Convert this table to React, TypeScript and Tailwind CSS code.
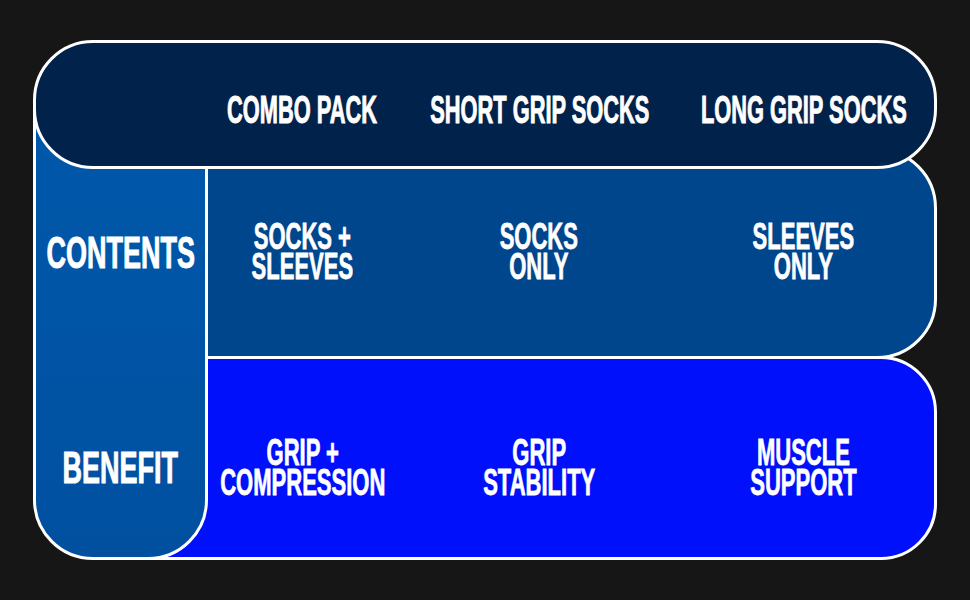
import React from "react";

const FONT = "font-['Liberation_Sans',Arial,sans-serif] font-bold text-white uppercase";

function HeadText({ children }: { children: React.ReactNode }) {
  return (
    <div className="flex justify-center">
      <span
        className={`${FONT} inline-block whitespace-nowrap text-[39px] leading-[39px] scale-x-[0.56] [-webkit-text-stroke:1px_white]`}
      >
        {children}
      </span>
    </div>
  );
}

function CellText({ a, b }: { a: string; b: string }) {
  return (
    <div className="flex justify-center">
      <div
        className={`${FONT} flex flex-col items-center whitespace-nowrap text-center text-[37px] leading-[30px] scale-x-[0.595] [-webkit-text-stroke:0.8px_white]`}
      >
        <span className="block h-[30px]">{a}</span>
        <span className="block h-[30px]">{b}</span>
      </div>
    </div>
  );
}

function RowLabel({ children }: { children: React.ReactNode }) {
  return (
    <span
      className={`${FONT} inline-block whitespace-nowrap text-[45px] leading-[45px] scale-x-[0.6] [-webkit-text-stroke:1px_white]`}
    >
      {children}
    </span>
  );
}

export default function App() {
  return (
    <div className="w-[970px] h-[600px] bg-[#161616] pt-[40px] pl-[33px]">
      <div className="flex flex-col w-[904px]">
        {/* Header row */}
        <div className="relative z-30 h-[129px] rounded-[60px] border-[3px] border-white bg-[#01224a] pt-[9px] grid grid-cols-[170px_192px_284px_244px] items-center">
          <div />
          <HeadText>Combo Pack</HeadText>
          <HeadText>Short Grip Socks</HeadText>
          <HeadText>Long Grip Socks</HeadText>
        </div>

        {/* Body */}
        <div className="flex -mt-[68px]">
          {/* Left label column */}
          <div className="relative z-20 w-[175px] h-[459px] shrink-0 rounded-b-[60px] border-[3px] border-white bg-gradient-to-b from-[#0058aa] to-[#0050a0] flex flex-col">
            <div className="h-[44px]" />
            <div className="h-[209px] flex items-center justify-center">
              <RowLabel>Contents</RowLabel>
            </div>
            <div className="flex-1 pt-[21px] flex items-center justify-center">
              <RowLabel>Benefit</RowLabel>
            </div>
          </div>

          {/* Right rows */}
          <div className="flex flex-col w-[732px] -ml-[3px] pt-[47px]">
            <div className="relative z-10 h-[211px] rounded-r-[60px] border-[3px] border-white bg-[#00468c] pb-[4px] grid grid-cols-[189px_284px_244px] items-center">
              <CellText a="Socks +" b="Sleeves" />
              <CellText a="Socks" b="Only" />
              <CellText a="Sleeves" b="Only" />
            </div>
            <div className="relative z-[15] w-[817px] h-[204px] -mt-[3px] -ml-[85px] rounded-r-[56px] border-[3px] border-white bg-[#0010fb] pl-[85px] pt-[20px] grid grid-cols-[189px_284px_244px] items-center">
              <CellText a="Grip +" b="Compression" />
              <CellText a="Grip" b="Stability" />
              <CellText a="Muscle" b="Support" />
            </div>
          </div>
        </div>
      </div>
    </div>
  );
}
